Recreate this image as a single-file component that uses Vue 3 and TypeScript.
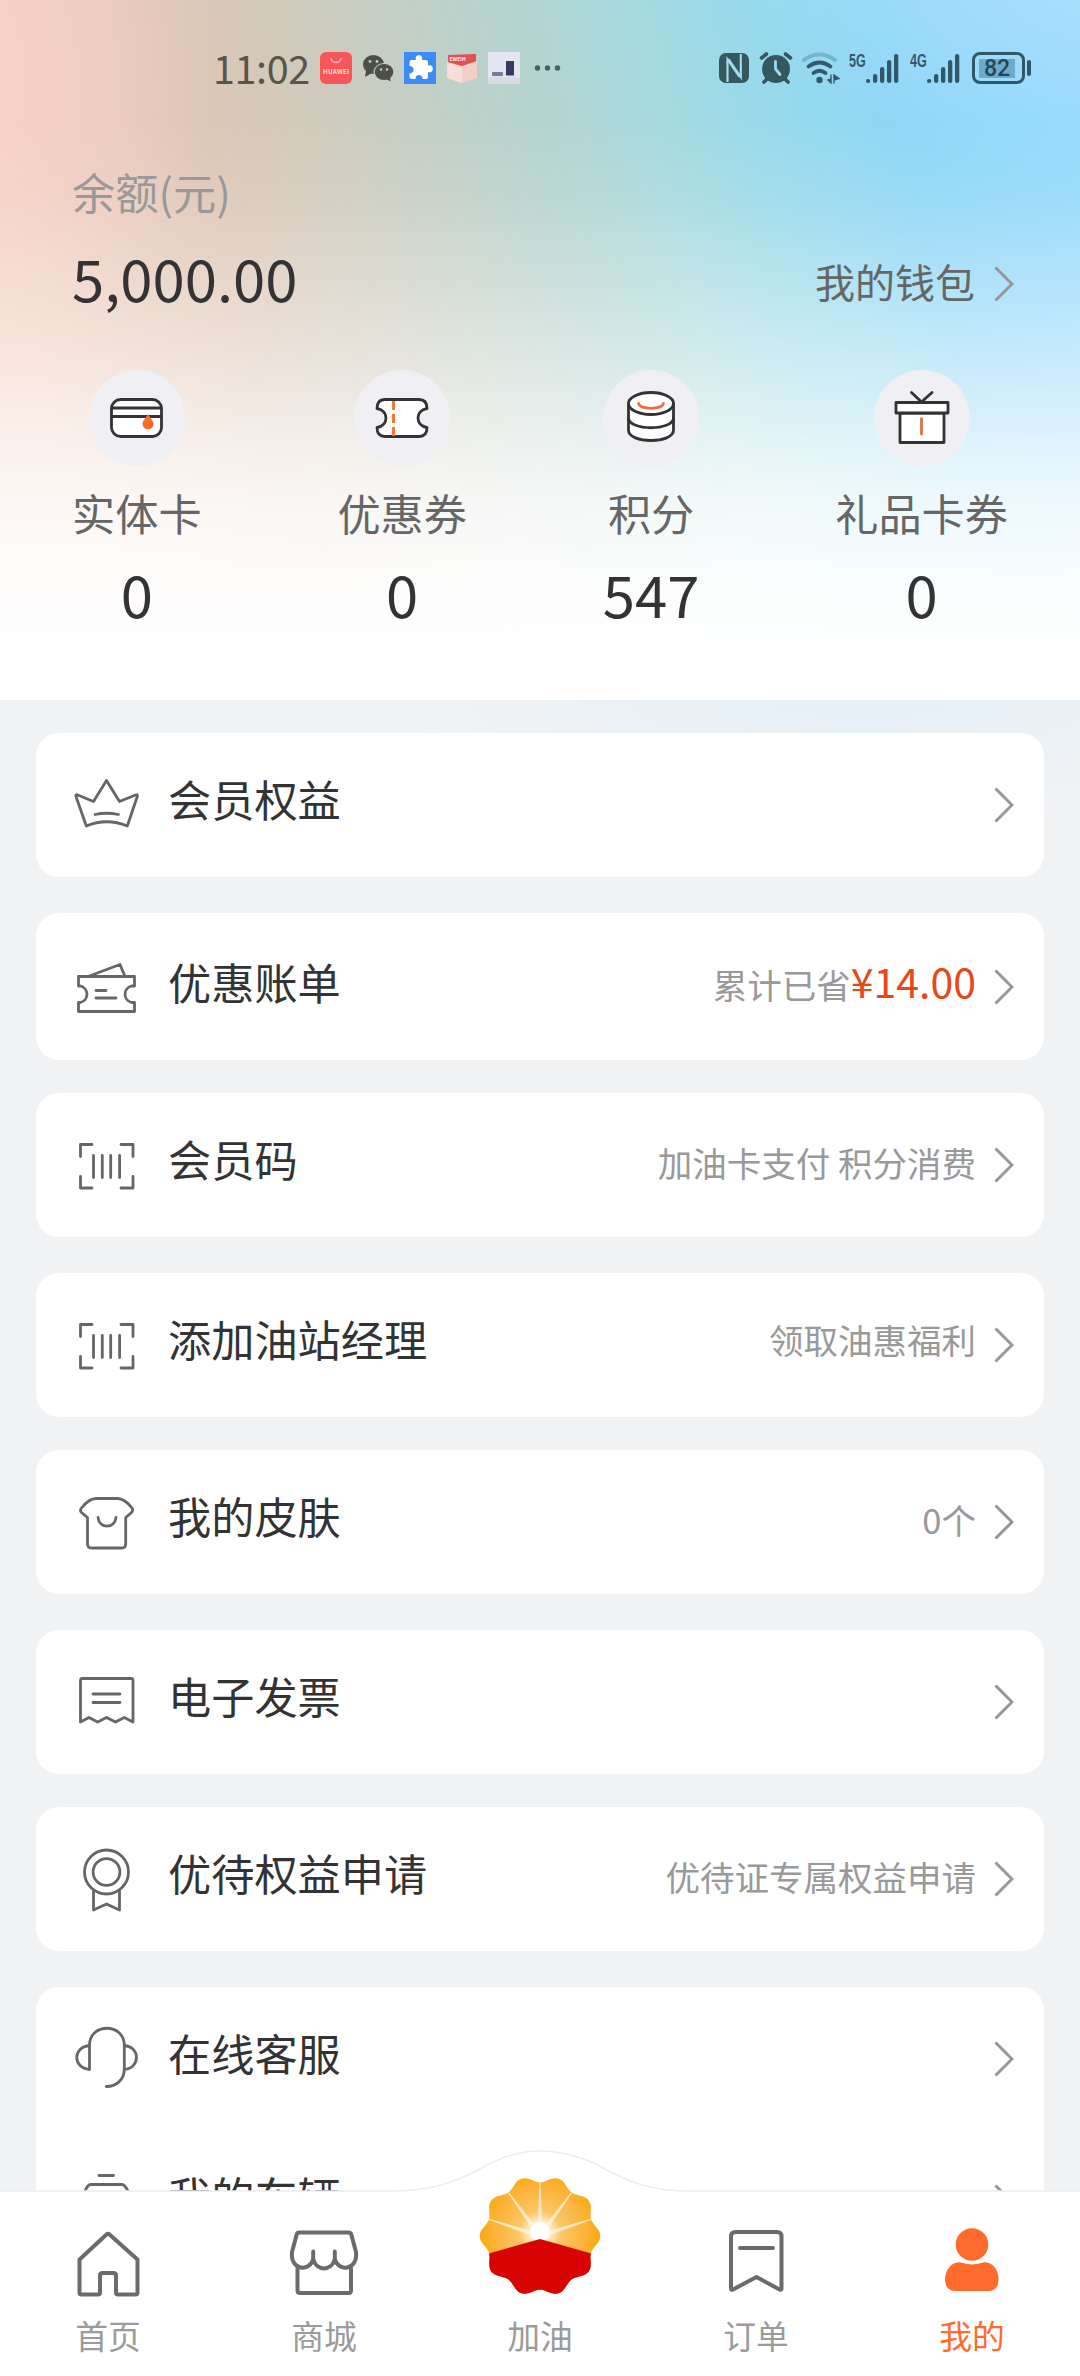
<script setup lang="ts">
interface Row {
  icon: string
  label: string
  note?: string
  amount?: string
  raised?: boolean
}

const stats = [
  { icon: 'card', label: '实体卡', value: '0' },
  { icon: 'coupon', label: '优惠券', value: '0' },
  { icon: 'points', label: '积分', value: '547' },
  { icon: 'gift', label: '礼品卡券', value: '0' },
]

const groups: Row[][] = [
  [{ icon: 'crown', label: '会员权益' }],
  [{ icon: 'bill', label: '优惠账单', note: '累计已省', amount: '¥14.00' }],
  [{ icon: 'code', label: '会员码', note: '加油卡支付 积分消费' }],
  [{ icon: 'code', label: '添加油站经理', note: '领取油惠福利', raised: true }],
  [{ icon: 'skin', label: '我的皮肤', note: '0个' }],
  [{ icon: 'invoice', label: '电子发票' }],
  [{ icon: 'medal', label: '优待权益申请', note: '优待证专属权益申请' }],
  [
    { icon: 'headset', label: '在线客服' },
    { icon: 'car', label: '我的车辆' },
  ],
]

// Line drawings of the list rows, on a 72 x 72 grid.
const rowIcons: Record<string, string> = {
  crown:
    'M36.5 11.5 L49.5 32.5 L65.5 26 Q68 25 67.3 27.5 L57.3 57 Q36.5 48.5 16.3 57 L6 27.5 Q5.300 25 7.800 26 L23.500 32.500 Z M25 45.500 Q36.500 43 48.500 45.500',
  bill:
    'M8.500 26.500 H64.500 V36 H61.500 A8.500 8.500 0 0 0 61.500 52.500 H64.500 V61.500 H8.500 V52.500 H10.500 A8.500 8.500 0 0 0 10.500 36 H8.500 Z M18 26.500 L50 14.500 L55 26.500 M26 40.500 H36 M26 48 H46',
  code:
    'M10.500 27.500 V15.500 H22 M51 15.500 H63 V27.500 M10.500 47.500 V59 H22 M51 59 H63 V47.500 M23.500 26.500 V48.500 M32.300 26.500 V48.500 M40.700 26.500 V48.500 M49.600 26.500 V48.500',
  skin:
    'M26 12.500 H47.500 C53 12.500 58 17 62 22 Q63.500 24.500 61.500 26.500 L55.700 31.500 V58 Q55.700 62 51.700 62 H21.500 Q17.500 62 17.500 58 V31.500 L11.500 26.500 Q9.500 24.500 11.500 22 C15.500 17 20 12.500 26 12.500 Z M28 31.500 C29 43 45 43 46 31.500',
  invoice:
    'M10.500 56 V14.500 Q10.500 12.500 12.500 12.500 H61 Q63 12.500 63 14.500 V56 L54.300 51.500 L45.500 56 L36.500 51.500 L27.700 56 L19 51.500 Z M23 28 H50 M23 36.500 H50',
  medal:
    'M58.500 29 A22 22 0 1 1 14.500 29 A22 22 0 1 1 58.500 29 Z M49.900 29 A13.400 13.400 0 1 1 23.100 29 A13.400 13.400 0 1 1 49.900 29 Z M23.500 47.500 V67 L36.500 61 L49.500 67 V47.500',
  headset:
    'M19.500 46.500 V22.500 C19.500 -.500 54.300 -.500 54.300 22.500 V46 C54.300 57 46 63.500 36.400 63.500 M19.500 22.500 C2.500 24 2.500 45 19.500 46.500 M54.300 22.500 C70.500 24 70.500 45 54.300 46.500',
  car: 'M29 9.500 H43.500 M13.500 28 C16 23 17.500 18.500 20.500 18.500 H52 C55 18.500 57 23 59.500 28 V58 H13.500 Z',
}

const tabs = [
  { icon: 'home', label: '首页' },
  { icon: 'store', label: '商城' },
  { icon: 'fuel', label: '加油' },
  { icon: 'order', label: '订单' },
  { icon: 'me', label: '我的' },
]

// Ten-lobed outline of the brand flower.
const flower = Array.from({ length: 180 }, (_, i) => {
  const t = (i / 180) * Math.PI * 2
  const r = 57 + 3.3 * Math.cos(10 * t)
  return `${(r * Math.cos(t)).toFixed(2)},${(r * Math.sin(t)).toFixed(2)}`
}).join(' ')

const rays = [18, 54, 90, 126, 162].map((deg) => {
  const point = (angle: number, r: number) =>
    `${(r * Math.cos((angle * Math.PI) / 180)).toFixed(2)},${(-r * Math.sin((angle * Math.PI) / 180)).toFixed(2)}`
  return `${point(deg - 13, 10)} ${point(deg - 0.6, 54)} ${point(deg + 0.6, 54)} ${point(deg + 13, 10)}`
})

const bars = [4, 9, 16, 23, 29]
</script>

<template>
  <div class="screen">
    <main class="content">
      <header class="hero">
        <div class="status">
          <span class="time">11:02</span>
          <div class="apps">
            <svg width="32" height="32" viewBox="0 0 32 32">
              <rect width="32" height="32" rx="6" fill="#f9565a" />
              <path d="M11 6 a5 4.500 0 0 0 10 0" fill="none" stroke="#ffc0b8" stroke-width="1.300" />
              <text x="16" y="21.500" font-size="6.300" font-weight="700" text-anchor="middle" fill="#ffd9d6" textLength="26">HUAWEI</text>
            </svg>
            <svg width="32" height="32" viewBox="0 0 32 32">
              <g fill="#4d5048">
                <ellipse cx="11.500" cy="12.500" rx="10.500" ry="9.500" />
                <path d="M4 19 L3 25 L10 21 Z" />
                <ellipse cx="21.800" cy="20" rx="10.300" ry="9" fill="#c9cdc1" />
                <ellipse cx="22" cy="20" rx="9.300" ry="8" />
                <path d="M24 27 L28.500 29.500 L28 24 Z" />
              </g>
              <g fill="#c9cdc1">
                <circle cx="8" cy="9.500" r="1.400" /><circle cx="15" cy="9.500" r="1.400" />
                <circle cx="19" cy="17.500" r="1.200" /><circle cx="25" cy="17.500" r="1.200" />
              </g>
            </svg>
            <svg width="32" height="32" viewBox="0 0 32 32">
              <rect width="32" height="32" fill="#3c8bf6" />
              <path d="M5.500 10 Q5.500 8 7.500 8 H12 C9.500 1.500 20.500 1.500 18 8 H22 Q24 8 24 10 V13.500 C30.500 11 30.500 22.500 24 20 V25 Q24 27 22 27 H18.500 C19 21.500 11 21.500 11.500 27 H8 Q5.500 27 5.500 25 V21.500 C11 21.500 11 14 5.500 14 Z" fill="#fff" />
            </svg>
            <svg width="32" height="32" viewBox="0 0 32 32">
              <path d="M2 3 L30 2 V14 H2 Z" fill="#e2504f" />
              <path d="M1 10 L16 14 L31 9 V26 L16 31 L1 26 Z" fill="#f2cfc7" />
              <path d="M1 10 L16 15 V31 L1 26 Z" fill="#f7ded8" />
              <text x="3.500" y="8.500" font-size="5" font-weight="700" fill="#fff">EWEIH</text>
            </svg>
            <svg width="32" height="32" viewBox="0 0 32 32">
              <rect width="32" height="32" fill="#e4e5f2" />
              <rect y="25" width="32" height="7" fill="#d8dae4" />
              <rect x="4" y="20" width="11" height="4" rx="1" fill="#777d91" />
              <rect x="18" y="9" width="8" height="14.500" fill="#343b5c" />
            </svg>
            <svg class="more" width="28" height="32" viewBox="0 0 28 32" fill="#48605f">
              <circle cx="4.500" cy="16" r="2.700" /><circle cx="14.500" cy="16" r="2.700" /><circle cx="24.500" cy="16" r="2.700" />
            </svg>
          </div>
          <div class="system">
            <svg width="30" height="32" viewBox="0 0 30 32">
              <rect y="1" width="30" height="30" rx="7" fill="#35585e" />
              <path d="M8.500 30 V7.500 L20.500 25 M21.800 2 V25 L9.500 7" fill="none" stroke="#a4daea" stroke-width="2.200" />
            </svg>
            <svg class="alarm" width="34" height="32" viewBox="0 0 34 32" fill="#35585e">
              <circle cx="17" cy="17" r="14" />
              <path d="M2.500 6 L7.500 2 M31.500 6 L26.500 2 M5 30 L9 26 M29 30 L25 26" stroke="#35585e" stroke-width="3.600" stroke-linecap="round" />
              <path d="M16.500 9.500 V17 L21 22.500" fill="none" stroke="#9bdaf0" stroke-width="2.800" stroke-linecap="round" />
            </svg>
            <svg class="wifi" width="40" height="32" viewBox="0 0 40 32" fill="none" stroke="#35596b" stroke-width="3.800" stroke-linecap="round">
              <path d="M3 8 Q18.500 -3 34 8" stroke="#74b6c9" />
              <path d="M7.500 14.500 Q18.500 6.500 29.500 14.500" />
              <path d="M12.500 21 Q18.500 16.500 24.500 21" />
              <circle cx="18.500" cy="28" r="3.200" fill="#35596b" stroke="none" />
              <path d="M30 23 V31 L27 28 L30 27 M33 31 V23 L38 26.500 L33 28" fill="#35596b" stroke-width="1.400" />
            </svg>
            <span class="net">5G</span>
            <svg width="33" height="32" viewBox="0 0 33 32">
              <rect v-for="(h, i) in bars" :key="i" :x="i * 7" :y="31 - h" width="4.300" :height="h" rx="2.100" fill="#31576b" />
            </svg>
            <span class="net second">4G</span>
            <svg width="33" height="32" viewBox="0 0 33 32">
              <rect v-for="(h, i) in bars" :key="i" :x="i * 7" :y="31 - h" width="4.300" :height="h" rx="2.100" fill="#31576b" />
            </svg>
            <div class="battery"><span>82</span></div>
            <i class="nub"></i>
          </div>
        </div>

        <p class="caption">余额(元)</p>
        <div class="balance">
          <strong>5,000.00</strong>
          <a class="wallet">
            <span>我的钱包</span>
            <svg class="chevron" width="20" height="36" viewBox="0 0 20 36"><path d="M1.500 1.500 L18 18 L1.500 34.500" /></svg>
          </a>
        </div>

        <ul class="stats">
          <li v-for="s in stats" :key="s.label">
            <div class="disc">
              <svg width="60" height="60" viewBox="0 0 60 60" fill="#fff" stroke="#333" stroke-width="2.800" stroke-linejoin="round" stroke-linecap="round">
                <template v-if="s.icon === 'card'">
                  <rect x="4.500" y="11.500" width="50" height="37" rx="9" />
                  <path d="M5 20 H54 M5 28.500 H54" />
                  <path d="M41 26 C44 31 46.500 33 46.500 36 A5.500 5.300 0 0 1 35.500 36 C35.500 33 38 31 41 26 Z" fill="#ff6a2b" stroke="none" />
                </template>
                <template v-else-if="s.icon === 'coupon'">
                  <path d="M13 11.500 H47 Q55 11.500 55 20.500 C43 22.500 43 37.500 55 39.500 Q55 48.500 47 48.500 H13 Q5 48.500 5 39.500 C17 37.500 17 22.500 5 20.500 Q5 11.500 13 11.500 Z" />
                  <path d="M21.500 13 V48" stroke="#ff6a2b" stroke-dasharray="9 4" stroke-linecap="butt" />
                </template>
                <template v-else-if="s.icon === 'points'">
                  <path d="M7.500 16 V42 C7.500 56 52.500 56 52.500 42 V16" />
                  <ellipse cx="30" cy="15.500" rx="22.500" ry="11" />
                  <path d="M7.500 30 C8 43 52 43 52.500 30" fill="none" />
                  <path d="M17.500 15.500 C19 22 41 22 42.500 15.500" fill="none" stroke="#f06b42" />
                </template>
                <template v-else>
                  <path d="M19.500 4.500 L29.500 14 L40 4.500" fill="none" />
                  <rect x="8" y="25" width="44" height="29.500" />
                  <rect x="4" y="14.500" width="52" height="10.500" />
                  <path d="M29.500 31 V46" stroke="#e06c45" />
                </template>
              </svg>
            </div>
            <span class="name">{{ s.label }}</span>
            <span class="value">{{ s.value }}</span>
          </li>
        </ul>
      </header>

      <div class="list">
        <section v-for="(group, g) in groups" :key="g" class="card">
          <div v-for="row in group" :key="row.label" class="row">
            <svg class="glyph" width="72" height="72" viewBox="0 0 72 72"><path :d="rowIcons[row.icon]" /></svg>
            <span class="label">{{ row.label }}</span>
            <span class="note" :class="{ raised: row.raised }">
              {{ row.note }}<b v-if="row.amount">{{ row.amount }}</b>
            </span>
            <svg class="chevron" width="20" height="36" viewBox="0 0 20 36"><path d="M1.500 1.500 L18 18 L1.500 34.500" /></svg>
          </div>
        </section>
      </div>
    </main>

    <nav class="tabbar">
      <svg class="hump" width="1080" height="46" viewBox="0 0 1080 46">
        <path d="M392 43 C432 43 455 34 479 21.500 C500 9 520 3 540 3 C560 3 585 9 606 21.500 C630 34 650 43 690 43 V46 H392 Z" fill="#fff" />
        <path d="M0 43 H392 C432 43 455 34 479 21.500 C500 9 520 3 540 3 C560 3 585 9 606 21.500 C630 34 650 43 690 43 H1080" fill="none" stroke="#ededee" stroke-width="1.500" />
      </svg>
      <a v-for="t in tabs" :key="t.label" class="tab" :class="t.icon">
        <svg v-if="t.icon === 'fuel'" class="logo" width="124" height="124" viewBox="-62 -62 124 124">
          <defs>
            <radialGradient id="sun" gradientUnits="userSpaceOnUse" cx="0" cy="-4" r="60">
              <stop offset="0" stop-color="#fff" />
              <stop offset=".14" stop-color="#fff4dc" />
              <stop offset=".35" stop-color="#fbc768" />
              <stop offset=".75" stop-color="#fbb33a" />
              <stop offset="1" stop-color="#fba90f" />
            </radialGradient>
            <clipPath id="lower"><path d="M-62 20.500 L0 3 L62 20.500 V62 H-62 Z" /></clipPath>
          </defs>
          <polygon :points="flower" fill="url(#sun)" />
          <polygon v-for="(ray, i) in rays" :key="i" :points="ray" fill="#fff3d6" opacity=".8" />
          <circle cx="0" cy="-4" r="10" fill="#fff" />
          <polygon :points="flower" fill="#d80404" clip-path="url(#lower)" />
        </svg>
        <svg v-else class="tabicon" width="72" height="72" viewBox="0 0 72 72" fill="none" stroke="#6b6b6b" stroke-width="4" stroke-linejoin="round" stroke-linecap="round">
          <path v-if="t.icon === 'home'" d="M34.500 6.500 Q36 5 37.500 6.500 L65.500 31.500 V64.500 Q65.500 66.500 63.500 66.500 H46 Q44 66.500 44 64.500 V47.500 Q44 45 41.500 45 H30.500 Q28 45 28 47.500 V64.500 Q28 66.500 26 66.500 H9.500 Q7.500 66.500 7.500 64.500 V31.500 Z" />
          <template v-else-if="t.icon === 'store'">
            <path d="M11.500 4.500 H60.500 Q62.800 4.500 63.300 6.500 L68 24 C70 43 50 44 46.800 31 C44 43.500 28 43.500 25.200 31 C22 44 2 43 4 24 L8.700 6.500 Q9.200 4.500 11.500 4.500 Z M25.200 23.500 V31 M46.800 23.500 V31" />
            <path d="M9.500 40 V62.500 Q9.500 65 12 65 H60.500 Q63 65 63 62.500 V40" />
          </template>
          <path v-else-if="t.icon === 'order'" d="M15.500 4 H57 Q61.500 4 61.500 8.500 V60.500 Q61.500 62.500 59.500 61.500 L36.500 49 L13 61.500 Q11 62.500 11 60.500 V8.500 Q11 4 15.500 4 Z M20 20 H53" />
          <g v-else fill="#ff6b2c" stroke="none">
            <circle cx="36" cy="16.500" r="16.300" />
            <path d="M24 34.300 Q36 38.500 48 34.300 C57 33.500 63 43 62.500 52 Q62 63 52 63 H20 Q9.500 63 9 52 C9 43 15 33.500 24 34.300 Z" />
          </g>
        </svg>
        <span>{{ t.label }}</span>
      </a>
    </nav>
  </div>
</template>

<style>
body {
  background: #f1f2f4;
}
</style>

<style scoped>
.screen {
  display: flex;
  flex-direction: column;
  width: 1080px;
  height: 2376px;
  overflow: hidden;
  font-family: "Noto Sans CJK SC", "Noto Sans", sans-serif;
  color: #333;
}
.content {
  height: 2191px;
  overflow: hidden;
  background:
    radial-gradient(ellipse 460px 130px at 860px 690px, #e3eff7, rgba(227, 239, 247, 0)),
    #f1f2f4;
}
svg {
  display: block;
  flex: none;
}
p,
ul {
  margin: 0;
  padding: 0;
  list-style: none;
}

/* Hero */
.hero {
  box-sizing: border-box;
  height: 700px;
  background:
    linear-gradient(180deg, rgba(255, 255, 255, 0) 120px, rgba(255, 255, 255, 0.1) 200px, rgba(255, 255, 255, 0.34) 300px, rgba(255, 255, 255, 0.6) 400px, rgba(255, 255, 255, 0.84) 500px, rgba(255, 255, 255, 0.96) 600px, #fff 660px),
    radial-gradient(ellipse 260px 330px at -40px 60px, rgba(250, 212, 201, 0.9), rgba(250, 212, 201, 0)),
    radial-gradient(ellipse 420px 240px at 1130px -60px, rgba(180, 226, 255, 0.8), rgba(170, 222, 255, 0)),
    linear-gradient(76deg, #f1cdbd 9%, #ddc6b5 27%, #cdccbe 39%, #b5d3cf 54%, #a8d9dc 63%, #99dae8 71%, #8ed6f6 83%, #94d9fd 100%);
}
.status {
  display: flex;
  align-items: center;
  height: 136px;
  padding-left: 213px;
}
.time {
  width: 107px;
  margin-top: -3px;
  font-size: 39.5px;
  line-height: 58px;
  letter-spacing: -0.4px;
  color: #5a5449;
}
.apps {
  display: flex;
  gap: 10px;
}
.more {
  margin-left: 3px;
}
.system {
  display: flex;
  align-items: center;
  margin-left: 158px;
}
.alarm {
  margin-left: 10px;
}
.wifi {
  margin-left: 8px;
}
.net {
  width: 16px;
  margin: -15px 1px 0 8px;
  font: 700 19px/17px "Liberation Sans", sans-serif;
  color: #35596b;
  transform: scaleX(0.66);
  transform-origin: 0 50%;
}
.net.second {
  margin-left: 11px;
}
.battery {
  display: flex;
  box-sizing: border-box;
  width: 53px;
  height: 32px;
  margin-left: 12px;
  padding: 3.5px 4px;
  border: 3px solid #31576b;
  border-radius: 8px;
}
.battery span {
  width: 36px;
  height: 19px;
  background: #6fa9c8;
  font: 500 23px/20px Roboto, sans-serif;
  text-align: center;
  color: #23485c;
}
.nub {
  width: 4px;
  height: 16px;
  margin-left: 2px;
  border-radius: 2px;
  background: #31576b;
}
.caption {
  margin: 25px 0 0 72px;
  font-size: 43.2px;
  line-height: 60px;
  color: #999;
}
.balance {
  display: flex;
  align-items: center;
  justify-content: space-between;
  height: 84px;
  margin-top: 18px;
  padding: 0 66px 0 72px;
}
.balance strong {
  margin-top: -9px;
  font-size: 58px;
  font-weight: 400;
  line-height: 84px;
}
.wallet {
  display: flex;
  align-items: center;
  gap: 19px;
  margin-top: 6px;
  font-size: 40px;
  line-height: 58px;
  color: #666;
}
.wallet span {
  margin-top: -6px;
}
.stats {
  display: flex;
  justify-content: space-between;
  margin-top: 47px;
  padding: 0 72px;
}
.stats li {
  display: flex;
  flex-direction: column;
  align-items: center;
}
.disc {
  display: grid;
  place-items: center;
  width: 96px;
  height: 96px;
  margin: 0 -5px;
  border-radius: 50%;
  background: #f0eff4;
}
.name {
  margin-top: 16px;
  font-size: 43.2px;
  line-height: 60px;
  color: #666;
}
.value {
  margin-top: 11px;
  font-size: 58px;
  line-height: 80px;
}

/* List */
.chevron path {
  fill: none;
  stroke: #979797;
  stroke-width: 3px;
}
.list {
  padding: 33px 36px 0;
}
.card {
  margin-bottom: 33px;
  border-radius: 23px;
  background: #fff;
}
.card:nth-child(1),
.card:nth-child(3),
.card:nth-child(5),
.card:nth-child(7) {
  margin-bottom: 36px;
}
.row {
  display: flex;
  align-items: center;
  height: 144px;
  padding: 0 30px 0 34px;
}
.card:nth-child(2) .row {
  height: 147px;
}
.row + .row {
  height: 142px;
}
.glyph {
  margin-top: -1px;
}
.glyph path {
  fill: none;
  stroke: #666;
  stroke-width: 2.8px;
  stroke-linejoin: round;
  stroke-linecap: round;
}
.label {
  margin: -15px 0 0 26px;
  font-size: 43.2px;
  line-height: 64px;
}
.card:nth-child(2) .label {
  margin-top: -11px;
}
.note {
  display: flex;
  align-items: center;
  margin: -6px 18px 0 auto;
  font-size: 34.5px;
  line-height: 50px;
  color: #999;
}
.note.raised {
  margin-top: -13px;
}
.note b {
  margin-top: -7px;
  font-size: 41px;
  font-weight: 400;
  color: #e8461b;
}

/* Tab bar */
.tabbar {
  position: relative;
  display: flex;
  height: 185px;
  background: #fff;
}
.hump {
  position: absolute;
  left: 0;
  bottom: 182px;
}
.tab {
  position: relative;
  display: flex;
  flex: 1;
  flex-direction: column;
  align-items: center;
  justify-content: flex-end;
  padding-bottom: 17px;
  font-size: 32.8px;
  line-height: 48px;
  color: #9b9b9b;
}
.tabicon {
  margin-bottom: 11px;
}
.logo {
  margin-bottom: 13px;
}
.tab.me {
  color: #ff6b2c;
}
</style>
